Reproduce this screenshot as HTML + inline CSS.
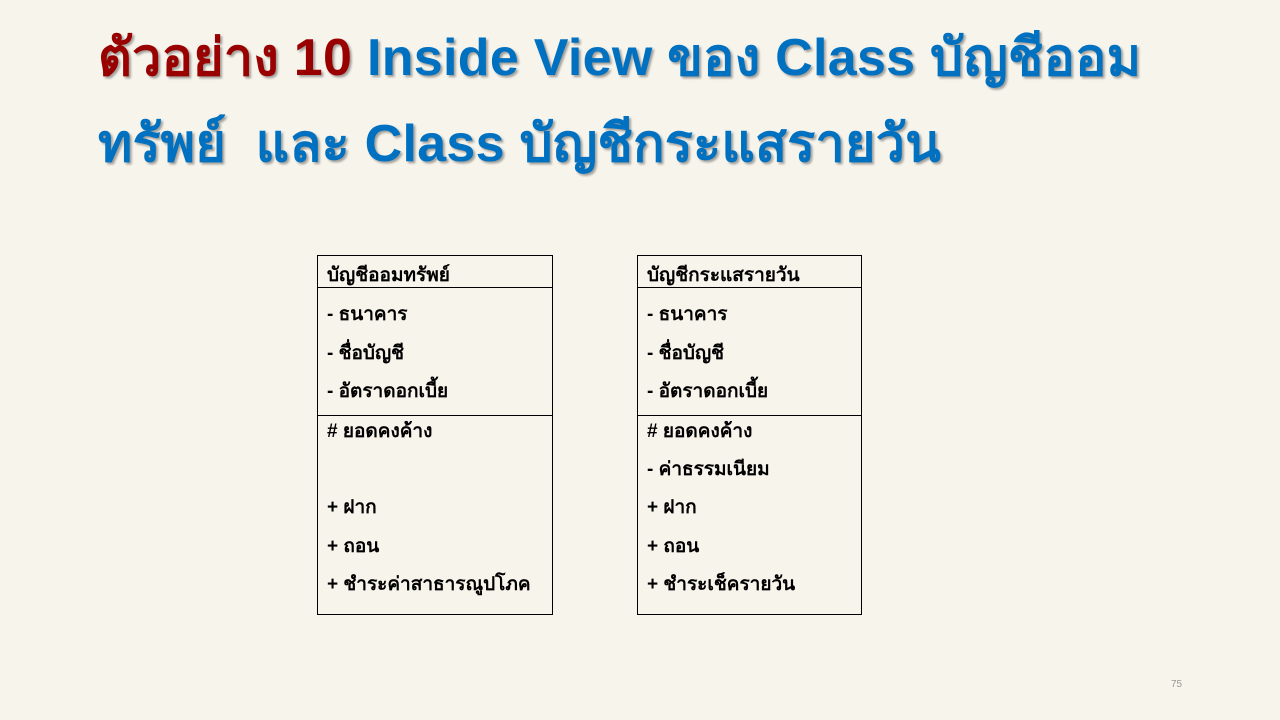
<!DOCTYPE html>
<html><head><meta charset="utf-8"><style>
body{margin:0;width:1280px;height:720px;background:#f7f4ec;position:relative;overflow:hidden;font-family:"Liberation Sans",sans-serif}
.t{position:absolute;left:98px;font-size:52px;font-weight:bold;color:#0070c0;text-shadow:2px 2px 2px rgba(0,0,0,.35);white-space:nowrap;line-height:60px;letter-spacing:0.3px}
.r{color:#990000}
.box{position:absolute;top:255px;height:358px;border:1px solid #000;}
.hl{position:absolute;left:0;right:0;border-top:1px solid #000}
.l{position:absolute;left:9px;font-size:19px;line-height:24px;color:#000;white-space:nowrap;font-weight:bold}
.pg{position:absolute;left:1171px;top:679px;font-size:10px;color:#999}
</style></head><body>
<div class="t" style="top:28px"><span class="r">ตัวอย่าง 10</span> Inside View ของ Class บัญชีออม</div>
<div class="t" style="top:114px">ทรัพย์&nbsp; และ Class บัญชีกระแสรายวัน</div>

<div class="box" style="left:317px;width:234px">
<div class="hl" style="top:31px"></div><div class="hl" style="top:159px"></div>
<div class="l" style="top:8px">บัญชีออมทรัพย์</div>
<div class="l" style="top:47px">- ธนาคาร</div>
<div class="l" style="top:86px">- ชื่อบัญชี</div>
<div class="l" style="top:124px">- อัตราดอกเบี้ย</div>
<div class="l" style="top:164px"># ยอดคงค้าง</div>
<div class="l" style="top:240px">+ ฝาก</div>
<div class="l" style="top:279px">+ ถอน</div>
<div class="l" style="top:317px">+ ชำระค่าสาธารณูปโภค</div>
</div>

<div class="box" style="left:637px;width:223px">
<div class="hl" style="top:31px"></div><div class="hl" style="top:159px"></div>
<div class="l" style="top:8px">บัญชีกระแสรายวัน</div>
<div class="l" style="top:47px">- ธนาคาร</div>
<div class="l" style="top:86px">- ชื่อบัญชี</div>
<div class="l" style="top:124px">- อัตราดอกเบี้ย</div>
<div class="l" style="top:164px"># ยอดคงค้าง</div>
<div class="l" style="top:202px">- ค่าธรรมเนียม</div>
<div class="l" style="top:240px">+ ฝาก</div>
<div class="l" style="top:279px">+ ถอน</div>
<div class="l" style="top:317px">+ ชำระเช็ครายวัน</div>
</div>
<div class="pg">75</div>
</body></html>
